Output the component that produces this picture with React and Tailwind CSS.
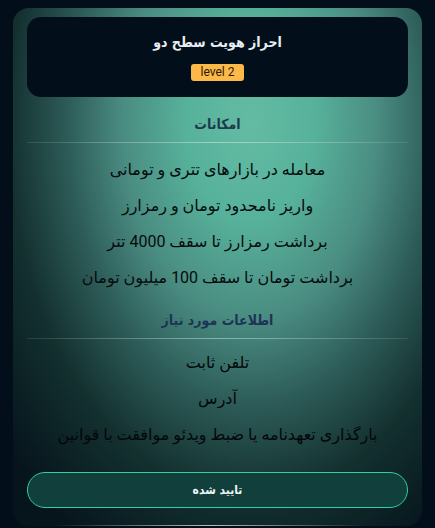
import React from 'react';

const features = [
  'معامله در بازارهای تتری و تومانی',
  'واریز نامحدود تومان و رمزارز',
  'برداشت رمزارز تا سقف 4000 تتر',
  'برداشت تومان تا سقف 100 میلیون تومان',
];

const required = [
  'تلفن ثابت',
  'آدرس',
  'بارگذاری تعهدنامه یا ضبط ویدئو موافقت با قوانین',
];

const App = () => {
  return (
    <div
      dir="rtl"
      className="min-h-screen bg-[#020f1a] pt-2 px-[13px] font-['Roboto','DejaVu_Sans',sans-serif]"
    >
      <div className="relative rounded-2xl overflow-hidden bg-[radial-gradient(ellipse_78%_95%_at_58%_22%,#64bba3_0%,#57b29b_20%,#4a8c81_40%,#2c5a56_58%,#13302f_76%,#06151c_100%)] px-[14px] pt-[9px] pb-[18px]">
        <div className="rounded-[14px] bg-[#020f1a] h-[80px] flex flex-col items-center pt-[13px]">
          <h1 className="text-[14px] font-bold font-['DejaVu_Sans_Condensed',sans-serif] text-[#e8edf2] leading-[24px]">احراز هویت سطح دو</h1>
          <span dir="ltr" className="mt-[10px] bg-[#fdb84a] text-[#2a1a05] text-[12px] leading-[17px] px-[10px] rounded-[3px]">
            level 2
          </span>
        </div>

        <div className="text-center text-[14px] font-bold font-['DejaVu_Sans_Condensed',sans-serif] text-[#1d3b4c] mt-[17px] leading-[20px]">امکانات</div>
        <div className="h-px bg-gradient-to-r from-white/10 via-white/40 to-white/10 mt-[8px]" />
        <div className="flex flex-col items-center gap-[16px] mt-[17px]">
          {features.map((t) => (
            <div key={t} className="text-[16px] text-[#070b0e] leading-[20px]">{t}</div>
          ))}
        </div>

        <div className="text-center text-[14px] font-bold font-['DejaVu_Sans_Condensed',sans-serif] text-[#1d3454] mt-[22px] leading-[20px]">اطلاعات مورد نیاز</div>
        <div className="h-px bg-gradient-to-r from-white/10 via-white/40 to-white/10 mt-[8px]" />
        <div className="flex flex-col items-center gap-[16px] mt-[14px]">
          {required.map((t) => (
            <div key={t} className="text-[16px] text-[#04070a] leading-[20px]">{t}</div>
          ))}
        </div>

        <button className="mt-[27px] w-full h-[36px] rounded-full border border-[#2fcf9f] bg-[#103f3c] text-[#eef3f4] text-[12px] font-bold font-['DejaVu_Sans_Condensed',sans-serif]">
          تایید شده
        </button>

        <div className="absolute bottom-0 left-[40px] right-[55px] h-px bg-gradient-to-r from-transparent via-white/70 to-transparent" />
      </div>
    </div>
  );
};

export default App;
